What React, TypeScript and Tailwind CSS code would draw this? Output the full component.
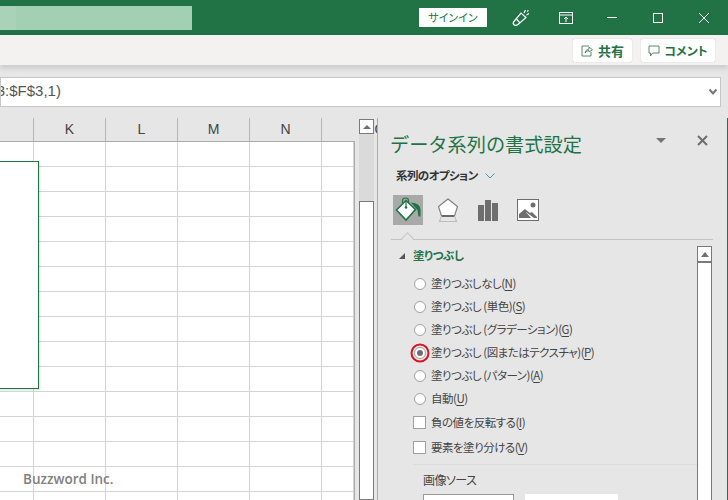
import React from "react";

const jp = "font-['Noto_Sans_CJK_JP','Noto_Sans',sans-serif] [font-feature-settings:'palt']";

const columns = ["", "K", "L", "M", "N", "O"];
const rows = Array.from({ length: 15 }, (_, i) => i);

const fillOptions = [
  { label: "塗りつぶしなし", key: "N" },
  { label: "塗りつぶし (単色)", key: "S" },
  { label: "塗りつぶし (グラデーション)", key: "G" },
  { label: "塗りつぶし (図またはテクスチャ)", key: "P", selected: true },
  { label: "塗りつぶし (パターン)", key: "A" },
  { label: "自動", key: "U" },
];

const Mnemonic = ({ label, k }: { label: string; k: string }) => (
  <span className="whitespace-nowrap">
    {label}(<span className="underline underline-offset-2">{k}</span>)
  </span>
);

const TitleBar = () => (
  <div className="flex h-[35px] items-center bg-[#217346] text-white">
    <div className="mt-px flex h-6 w-[192px] bg-[#a3cfb3]">
      <div className="w-4 bg-[#a9d2b8]" />
    </div>
    <button className={`ml-[227px] flex h-[19px] w-[68px] items-center justify-center bg-white text-[11px] text-[#217346] ${jp}`}>
      サインイン
    </button>
    <svg className="ml-[24px]" width="20" height="20" viewBox="0 0 20 20" fill="none" stroke="white" strokeWidth="1.2">
      <path d="M2.5 14 L10 5 L15 9.5 L7 16.5 Q5 18 3.5 17 Q1.5 15.5 2.5 14 Z" />
      <path d="M5.5 11 L9 15" />
      <path d="M13 5 L14.5 2 M15.5 7 L18 5.5 M16 3.5 L17.5 2.5" />
    </svg>
    <svg className="ml-[28px]" width="14" height="12" viewBox="0 0 14 12" fill="none" stroke="white" strokeWidth="1">
      <rect x="0.5" y="0.5" width="13" height="11" />
      <path d="M0.5 3 H13.5" />
      <path d="M7 10 V5 M5 7 L7 5 L9 7" />
    </svg>
    <div className="ml-[34px] h-px w-[10px] bg-white" />
    <div className="ml-[36px] size-[10px] border border-white" />
    <svg className="ml-[36px]" width="10" height="10" viewBox="0 0 10 10" stroke="white" strokeWidth="1">
      <path d="M0 0 L10 10 M10 0 L0 10" />
    </svg>
  </div>
);

const RibbonBar = () => (
  <div className="relative z-10 flex h-[30px] items-center justify-end gap-[9px] bg-[#f3f2f1] pr-[13px] pt-px shadow-[0_3px_5px_rgba(0,0,0,0.12)]">
    <button className={`flex h-[23px] w-[59px] items-center justify-center gap-[5px] rounded-[2px] bg-white text-[13px] font-bold text-[#217346] shadow-[0_0_1px_rgba(0,0,0,0.3)] ${jp}`}>
      <svg width="12" height="12" viewBox="0 0 12 12" fill="none" stroke="#4a7c62" strokeWidth="0.9">
        <path d="M8 1 H1 V11 H10 V7" />
        <path d="M4 8 Q4.5 4.5 8 4 V2 L11.5 4.8 L8 7 V5.5 Q5.5 5.5 4 8 Z" />
      </svg>
      共有
    </button>
    <button className={`flex h-[23px] w-[74px] items-center justify-center gap-[4px] rounded-[2px] bg-white text-[12px] font-bold text-[#217346] shadow-[0_0_1px_rgba(0,0,0,0.3)] ${jp}`}>
      <svg width="12" height="12" viewBox="0 0 12 12" fill="none" stroke="#4a7c62" strokeWidth="0.9">
        <path d="M1 1 H11 V8 H4.5 L2.5 11 V8 H1 Z" />
      </svg>
      コメント
    </button>
  </div>
);

const FormulaBar = () => (
  <div className="flex h-[53px] items-start bg-[#e6e6e6] pr-[7px] pt-3">
    <div className="flex h-[30px] flex-1 items-center overflow-hidden border border-[#c6c6c6] bg-white">
      <span className="ml-[-31px] flex-1 whitespace-nowrap pb-[2px] font-['Liberation_Sans',sans-serif] text-[15px] text-[#555]">
        $B$3:$F$3,1)
      </span>
      <svg className="mr-[2px]" width="10" height="8" viewBox="0 0 10 8" fill="none" stroke="#777" strokeWidth="2">
        <path d="M1.5 1.5 L5 5.5 L8.5 1.5" />
      </svg>
    </div>
  </div>
);

const Sheet = () => (
  <div className="relative flex h-full w-[378px] shrink-0 overflow-hidden">
    <div className="flex w-[355px] flex-col">
      <div className="grid h-[24px] shrink-0 grid-cols-[34px_repeat(4,72px)_33px] border-b border-[#ababab]">
        {columns.map((c, i) => (
          <div
            key={i}
            className={`flex items-center justify-center overflow-hidden font-['Liberation_Sans',sans-serif] text-[14px] text-[#444] ${i < 5 ? "border-r border-[#b5b5b5]" : "pl-[58px]"}`}
          >
            {c}
          </div>
        ))}
      </div>
      <div className="relative flex-1 overflow-hidden border-r border-[#ababab] bg-white">
        <div className="grid grid-cols-[34px_repeat(4,72px)_32px]">
          {rows.flatMap((r) =>
            columns.map((_, c) => (
              <div key={`${r}-${c}`} className="h-[25px] border-b border-r border-[#d4d4d4]" />
            )),
          )}
        </div>
        {/* chart object */}
        <div className="absolute left-[-2px] top-[19px] h-[228px] w-[41px] border border-[#217346] bg-white shadow-[1px_1px_2px_rgba(33,115,70,0.2)]" />
      </div>
    </div>
    <div className="ml-1 flex w-[15px] shrink-0 flex-col pt-px">
      <div className="flex h-[15px] shrink-0 items-center justify-center border border-[#7a7a7a] bg-white">
        <div className="h-0 w-0 border-x-[4px] border-b-[4px] border-x-transparent border-b-[#6f6f6f]" />
      </div>
      <div className="h-[67px] shrink-0 bg-[#dadada]" />
      <div className="flex-1 border border-[#7a7a7a] bg-white" />
    </div>
    <div className="ml-[3px] w-px shrink-0 bg-[#ababab]" />
    <div className="absolute bottom-[13px] left-[23px] font-['Open_Sans',sans-serif] text-[13.5px] font-semibold leading-4 text-[#808080]">
      Buzzword Inc.
    </div>
  </div>
);

const FillIcon = () => (
  <svg width="30" height="30" viewBox="0 0 30 30">
    <path d="M13 5.5 L22.5 14.5 L13 25 L3.5 15 Z" fill="white" stroke="#217346" strokeWidth="1.6" />
    <path d="M9.5 8 V5.5 Q9.5 3 12.5 3 Q15.5 3 15.5 5.5 V8" fill="none" stroke="#217346" strokeWidth="1.2" />
    <path d="M13 5 V12" stroke="#217346" strokeWidth="1.2" />
    <circle cx="13" cy="12.5" r="1.3" fill="#217346" />
    <path d="M18 7.5 Q27.5 8 27.5 15 V21.5 L25.5 21.5 L24.5 15 L21 11 Z" fill="#217346" />
  </svg>
);

const PanelTabs = () => (
  <div className="ml-[2px] mt-[10px] flex items-center">
    <div className="flex size-[30px] items-center justify-center bg-[#a9a9a9]">
      <FillIcon />
    </div>
    <svg className="ml-[15px]" width="20" height="24" viewBox="0 0 20 24" fill="none">
      <path d="M10 1 L19.5 8.5 L16.5 18 H3.5 L0.5 8.5 Z" fill="white" stroke="#7a7a7a" strokeWidth="1.1" />
      <path d="M3.5 18 H16.5" stroke="#6a6a6a" strokeWidth="2" />
      <path d="M3.5 18 L1.5 23.5 H18.5 L16.5 18" stroke="#bdbdbd" strokeWidth="1.1" />
    </svg>
    <svg className="ml-[20px]" width="20" height="21" viewBox="0 0 20 21" fill="#6e6e6e">
      <rect x="0" y="5" width="6" height="16" />
      <rect x="7" y="0" width="6" height="21" />
      <rect x="14" y="3" width="6" height="18" />
    </svg>
    <svg className="ml-[19px]" width="22" height="22" viewBox="0 0 22 22">
      <rect x="0.5" y="0.5" width="21" height="21" fill="white" stroke="#6e6e6e" />
      <circle cx="16" cy="6" r="2.5" fill="#6e6e6e" />
      <path d="M2 19 V15 L8 10 L13 14 L15 13 L20 18 V19 H17 L9 13 L4 19 Z" fill="#6e6e6e" />
      <path d="M2 19 L8 12 L14 19 Z" fill="#6e6e6e" />
    </svg>
  </div>
);

const Radio = ({ selected }: { selected?: boolean }) => (
  <span className="relative flex size-3 shrink-0 items-center justify-center rounded-full border border-[#a0a0a0] bg-white">
    {selected && <span className="size-[6px] rounded-full bg-[#6e6e6e]" />}
    {selected && (
      <span className="absolute left-1/2 top-1/2 size-[19px] -translate-x-1/2 -translate-y-1/2 rounded-full border-2 border-[#d8141e]" />
    )}
  </span>
);

const FormatPanel = () => (
  <div className={`relative flex h-full flex-1 flex-col border-r border-r-[#217346] pl-[13px] ${jp}`}>
    <div className="flex h-[39px] shrink-0 items-start pr-[19px] pt-[13px]">
      <h2 className="-ml-px whitespace-nowrap text-[19.2px] font-normal leading-[26px] text-[#217346] [font-feature-settings:normal]">
        データ系列の書式設定
      </h2>
      <div className="ml-auto mr-[31px] mt-[7px] h-0 w-0 border-x-[5px] border-t-[5px] border-x-transparent border-t-[#757575]" />
      <svg className="mt-[4px]" width="11" height="11" viewBox="0 0 11 11" stroke="#6e6e6e" strokeWidth="2">
        <path d="M1 1 L10 10 M10 1 L1 10" />
      </svg>
    </div>
    <div className="ml-[5px] mt-[10px] flex h-[18px] items-center gap-[7px] text-[11.5px] font-bold tracking-[-0.6px] text-[#333]">
      系列のオプション
      <svg width="10" height="6" viewBox="0 0 10 6" fill="none" stroke="#4d8fc7" strokeWidth="1">
        <path d="M0.5 0.5 L5 5 L9.5 0.5" />
      </svg>
    </div>
    <PanelTabs />
    {/* tab divider with notch under the active tab */}
    <div className="relative mr-[14px] mt-[14px] h-px shrink-0 bg-[#c4c4c4]">
      <div className="absolute left-[12px] top-[-5px] size-[9px] rotate-45 border-l border-t border-[#c4c4c4] bg-[#e6e6e6]" />
    </div>
    <div className="flex flex-1 overflow-hidden">
      <div className="w-[306px] shrink-0">
        <div className="mt-[6px] flex h-[19px] items-center text-[11.5px] font-bold tracking-[-0.5px] text-[#217346]">
          <span className="ml-[8px] mr-[8px] h-0 w-0 border-b-[6px] border-l-[6px] border-b-[#555] border-l-transparent" />
          塗りつぶし
        </div>
        <div className="mt-[7px] flex flex-col text-[11.5px] tracking-[-0.5px] text-[#444]">
          {fillOptions.map((o) => (
            <div key={o.key} className="flex h-[23px] items-center gap-[5px] pl-[23px]">
              <Radio selected={o.selected} />
              <Mnemonic label={o.label} k={o.key} />
            </div>
          ))}
          <div className="flex h-[25px] items-center gap-[5px] pl-[22px]">
            <span className="size-[13px] shrink-0 border border-[#a0a0a0] bg-white" />
            <Mnemonic label="負の値を反転する" k="I" />
          </div>
          <div className="flex h-[25px] items-center gap-[5px] pl-[22px]">
            <span className="size-[13px] shrink-0 border border-[#a0a0a0] bg-white" />
            <Mnemonic label="要素を塗り分ける" k="V" />
          </div>
        </div>
        <div className="ml-[22px] mt-[4px] h-px bg-[#dcdcdc]" />
        <div className="ml-[32px] mt-[6px] text-[12px] leading-[18px] tracking-[-0.5px] text-[#444]">画像ソース</div>
        <div className="ml-[32px] mt-[5px] flex gap-[11px]">
          <div className="h-8 w-[91px] border border-[#9a9a9a] bg-white" />
          <div className="h-8 w-[93px] bg-white" />
        </div>
      </div>
      <div className="mt-[6px] flex w-[15px] shrink-0 flex-col border-x border-[#7a7a7a]">
        <div className="flex h-[15px] items-center justify-center border-t border-[#7a7a7a] bg-white">
          <div className="h-0 w-0 border-x-[4px] border-b-[5px] border-x-transparent border-b-[#6f6f6f]" />
        </div>
        <div className="h-[2px] bg-[#7a7a7a]" />
        <div className="flex-1 bg-white" />
      </div>
    </div>
  </div>
);

export default function App() {
  return (
    <div className="flex h-[500px] w-[728px] flex-col overflow-hidden bg-[#e6e6e6]">
      <TitleBar />
      <RibbonBar />
      <FormulaBar />
      <div className="flex min-h-0 flex-1">
        <Sheet />
        <FormatPanel />
      </div>
    </div>
  );
}
